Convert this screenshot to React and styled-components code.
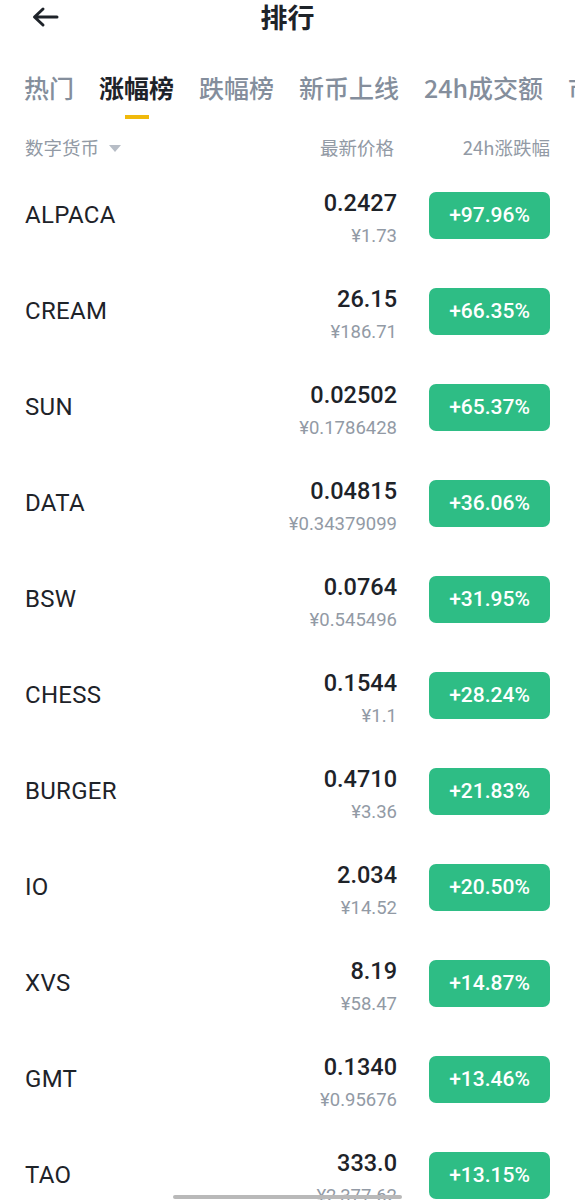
import React from "react";
import styled, { createGlobalStyle } from "styled-components";

const Global = createGlobalStyle`
  html, body { margin: 0; padding: 0; background: #fff; }
  body {
    width: 575px; height: 1200px; overflow: hidden;
    font-family: Roboto, "Noto Sans CJK SC", sans-serif;
    color: #1e2329;
  }
`;

const Page = styled.div`
  position: relative;
  width: 575px;
  height: 1200px;
  overflow: hidden;
  background: #fff;
`;

const TopBar = styled.div`
  display: grid;
  grid-template-columns: 1fr auto 1fr;
  align-items: center;
  height: 34px;
  padding: 0 31px;
`;

const Back = styled.div`
  display: flex;
  align-items: center;
  height: 34px;
`;

const Title = styled.div`
  font-family: "Noto Sans CJK SC", sans-serif;
  font-size: 27px;
  font-weight: 700;
  line-height: 32px;
  color: #1e2329;
`;

const Tabs = styled.div`
  display: flex;
  gap: 25px;
  padding: 0 0 0 24px;
  margin-top: 35px;
  white-space: nowrap;
  overflow: hidden;
`;

const Tab = styled.div`
  position: relative;
  flex: none;
  font-family: "Noto Sans CJK SC", sans-serif;
  font-size: 25px;
  line-height: 36px;
  font-weight: ${(p) => (p.$active ? 700 : 500)};
  color: ${(p) => (p.$active ? "#1e2329" : "#848e9c")};
  padding-bottom: 14px;
  &::after {
    content: "";
    display: ${(p) => (p.$active ? "block" : "none")};
    position: absolute;
    left: 50%;
    bottom: 0;
    transform: translateX(-50%);
    width: 24px;
    height: 4px;
    background: #f0b90b;
  }
`;

const HeadRow = styled.div`
  display: grid;
  grid-template-columns: 1fr 140px 156px;
  align-items: center;
  padding: 0 25px;
  margin-top: 13px;
  height: 30px;
  font-family: "Noto Sans CJK SC", sans-serif;
  font-size: 18.5px;
  color: #929aa5;
`;

const HeadCell = styled.div`
  display: flex;
  align-items: center;
  justify-content: ${(p) => p.$align || "flex-start"};
  gap: 10px;
`;

const Caret = styled.span`
  width: 0;
  height: 0;
  border-left: 6px solid transparent;
  border-right: 6px solid transparent;
  border-top: 7px solid #b7bdc6;
  margin-top: 2px;
`;

const List = styled.div`
  display: flex;
  flex-direction: column;
  margin-top: 5px;
`;

const Row = styled.div`
  display: grid;
  grid-template-columns: 1fr 140px 153px;
  align-items: center;
  height: 96px;
  padding: 0 25px;
`;

const Name = styled.div`
  font-size: 24px;
  font-weight: 400;
  color: #1e2329;
  letter-spacing: 0.3px;
`;

const PriceCol = styled.div`
  display: flex;
  flex-direction: column;
  align-items: flex-end;
  gap: 9px;
  margin-top: 6px;
`;

const Price = styled.div`
  font-size: 23.5px;
  font-weight: 500;
  line-height: 26px;
  color: #1e2329;
`;

const Sub = styled.div`
  font-size: 18.5px;
  line-height: 22px;
  color: #929aa5;
`;

const Badge = styled.div`
  justify-self: end;
  width: 121px;
  height: 47px;
  border-radius: 7px;
  background: #2ebd85;
  color: #fff;
  display: flex;
  align-items: center;
  justify-content: center;
  font-size: 21px;
  font-weight: 500;
`;

const HomeBar = styled.div`
  position: absolute;
  left: 173px;
  bottom: 1px;
  width: 229px;
  height: 4px;
  border-radius: 2px;
  background: #b9b9b9;
`;

const rows = [
  ["ALPACA", "0.2427", "¥1.73", "+97.96%"],
  ["CREAM", "26.15", "¥186.71", "+66.35%"],
  ["SUN", "0.02502", "¥0.1786428", "+65.37%"],
  ["DATA", "0.04815", "¥0.34379099", "+36.06%"],
  ["BSW", "0.0764", "¥0.545496", "+31.95%"],
  ["CHESS", "0.1544", "¥1.1", "+28.24%"],
  ["BURGER", "0.4710", "¥3.36", "+21.83%"],
  ["IO", "2.034", "¥14.52", "+20.50%"],
  ["XVS", "8.19", "¥58.47", "+14.87%"],
  ["GMT", "0.1340", "¥0.95676", "+13.46%"],
  ["TAO", "333.0", "¥2,377.62", "+13.15%"],
];

const tabs = ["热门", "涨幅榜", "跌幅榜", "新币上线", "24h成交额", "市值"];

export default function App() {
  return (
    <Page>
      <Global />
      <TopBar>
        <Back>
          <svg width="28" height="22" viewBox="0 0 28 22" fill="none">
            <path d="M26 11H4M12 3L3.5 11L12 19" stroke="#1e2329" strokeWidth="3" strokeLinecap="round" strokeLinejoin="round" />
          </svg>
        </Back>
        <Title>排行</Title>
        <div />
      </TopBar>
      <Tabs>
        {tabs.map((t, i) => (
          <Tab key={t} $active={i === 1}>{t}</Tab>
        ))}
      </Tabs>
      <HeadRow>
        <HeadCell>数字货币<Caret /></HeadCell>
        <HeadCell $align="flex-end">最新价格</HeadCell>
        <HeadCell $align="flex-end">24h涨跌幅</HeadCell>
      </HeadRow>
      <List>
        {rows.map(([n, p, s, c]) => (
          <Row key={n}>
            <Name>{n}</Name>
            <PriceCol>
              <Price>{p}</Price>
              <Sub>{s}</Sub>
            </PriceCol>
            <Badge>{c}</Badge>
          </Row>
        ))}
      </List>
      <HomeBar />
    </Page>
  );
}
